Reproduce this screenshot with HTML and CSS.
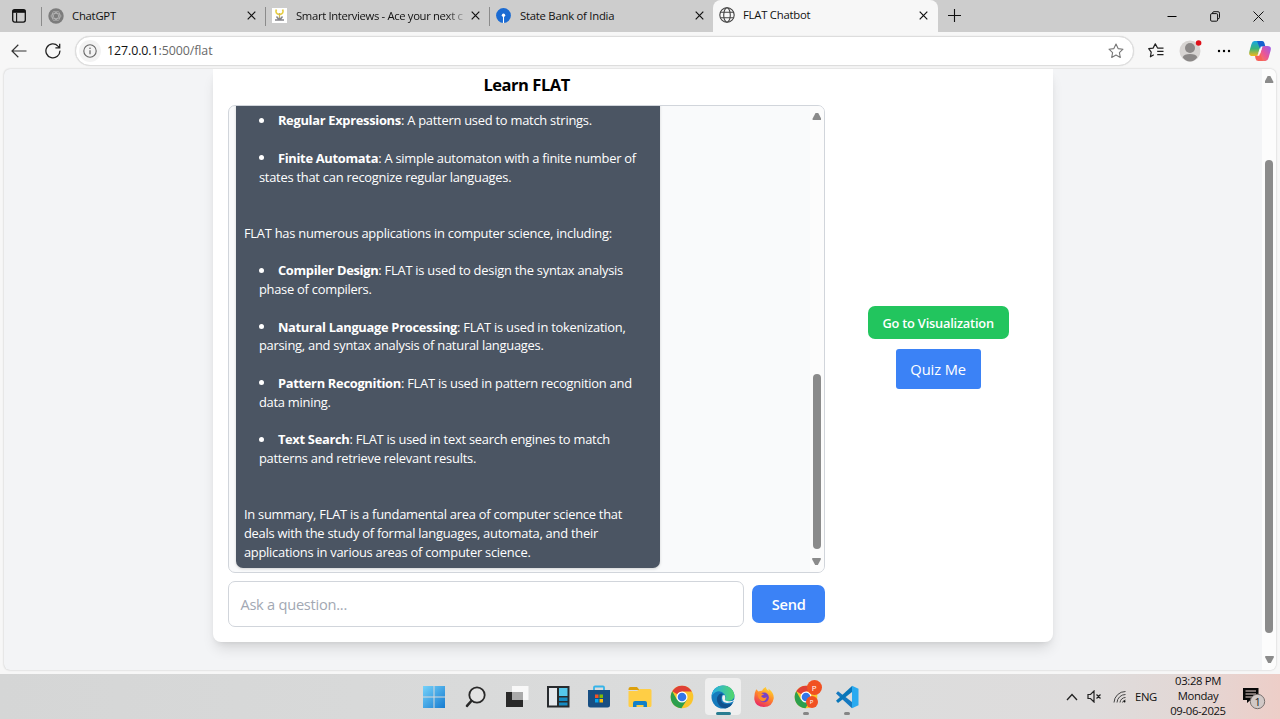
FILE: index.html
```html
<!DOCTYPE html>
<html lang="en">
<head>
<meta charset="utf-8">
<title>FLAT Chatbot</title>
<link rel="stylesheet" href="styles.css">
</head>
<body>
<header class="tabs">
  <div class="tab-menu"><svg width="14" height="14" viewBox="0 0 14 14"><rect x=".7" y=".7" width="12.6" height="12.4" rx="2" fill="none" stroke="#111" stroke-width="1.3"/><path d="M1.200 1.200h11.600v2H1.200z" fill="#111" stroke="#111" stroke-width="1.100"/><path d="M4.600 4v9" stroke="#111" stroke-width="1.100"/></svg></div>
  <div class="tab tab-1">
    <svg width="16" height="16" viewBox="0 0 16 16"><circle cx="8" cy="8" r="7.7" fill="#7c7c7c"/><g fill="none" stroke="#b5b5b5" stroke-width=".8"><ellipse cx="8" cy="8" rx="4.9" ry="2.6"/><ellipse cx="8" cy="8" rx="4.9" ry="2.6" transform="rotate(60 8 8)"/><ellipse cx="8" cy="8" rx="4.9" ry="2.6" transform="rotate(120 8 8)"/></g></svg>
    <span class="tab-name">ChatGPT</span>
    <svg class="x" width="9" height="9" viewBox="0 0 9 9"><path d="M.7.7l7.6 7.6M8.3.7L.7 8.3"/></svg>
  </div>
  <div class="tab tab-2">
    <svg width="15" height="15" viewBox="0 0 15 15"><path d="M0 0h15v15H0z" fill="#fff"/><path d="M4.500 1.500c-1.500 2.500 0 5 3 5s4.500-2.500 3-5" fill="none" stroke="#e6cd45" stroke-width="1.700"/><path d="M7.500 5v5" stroke="#cdb65a" stroke-width="1.300"/><path d="M4.500 8.500l1.500 2h3l1.500-2M3 12h9" fill="none" stroke="#85858a" stroke-width="1.400"/></svg>
    <span class="tab-name fade">Smart Interviews - Ace your next c</span>
    <svg class="x" width="9" height="9" viewBox="0 0 9 9"><path d="M.7.7l7.6 7.6M8.3.7L.7 8.3"/></svg>
  </div>
  <div class="tab tab-3">
    <svg width="15" height="15" viewBox="0 0 15 15"><circle cx="7.500" cy="7.500" r="7.400" fill="#1b6bd2"/><circle cx="7.500" cy="7.300" r="1.700" fill="#fff"/><path d="M7.500 7v8" stroke="#fff" stroke-width="1.100"/></svg>
    <span class="tab-name">State Bank of India</span>
    <svg class="x" width="9" height="9" viewBox="0 0 9 9"><path d="M.7.7l7.6 7.6M8.3.7L.7 8.3"/></svg>
  </div>
  <div class="tab active">
    <svg width="16" height="16" viewBox="0 0 16 16" fill="none" stroke="#444" stroke-width="1.100"><circle cx="8" cy="8" r="7.200"/><ellipse cx="8" cy="8" rx="3.300" ry="7.200"/><path d="M1.500 5.300h13M1.500 10.700h13"/></svg>
    <span class="tab-name">FLAT Chatbot</span>
    <svg class="x" width="9" height="9" viewBox="0 0 9 9"><path d="M.7.7l7.6 7.6M8.3.7L.7 8.3"/></svg>
  </div>
  <svg class="plus" width="13" height="13" viewBox="0 0 13 13"><path d="M6.500 0v13M0 6.500h13" stroke="#111" stroke-width="1.100"/></svg>
  <div class="window-buttons">
    <svg width="10" height="11" viewBox="0 0 10 11"><path d="M.5 5.500h9" stroke="#000"/></svg>
    <svg width="10" height="11" viewBox="0 0 10 11" fill="none" stroke="#111"><rect x=".6" y="2.600" width="7" height="7.600" rx="1.200"/><path d="M2.600 2.600V2q0-1.300 1.300-1.300H8Q9.500.7 9.500 2.200v4.300q0 1.300-1.500 1.300"/></svg>
    <svg width="11" height="11" viewBox="0 0 11 11"><path d="M.5.5l10 10M10.500.5l-10 10" stroke="#111"/></svg>
  </div>
</header>

<nav class="toolbar">
  <svg class="back" width="16" height="14" viewBox="0 0 16 14" fill="none" stroke="#333" stroke-width="1.200"><path d="M15.500 7H1.200M7.300.8L1 7l6.300 6.200"/></svg>
  <svg class="reload" width="16" height="16" viewBox="0 0 16 16" fill="none" stroke="#222" stroke-width="1.300"><path d="M14.900 7.600A7 7 0 1 1 13 3.100l1.500 1.500M14.700.7v4.200h-4.300"/></svg>
  <div class="address">
    <span class="info"><svg width="14" height="14" viewBox="0 0 14 14"><circle cx="7" cy="7" r="6.200" fill="none" stroke="#666" stroke-width="1.100"/><path d="M7 6.200v4" stroke="#666" stroke-width="1.200"/><circle cx="7" cy="4.200" r=".8" fill="#666"/></svg></span>
    <span class="url">127.0.0.1<span>:5000/flat</span></span>
    <svg class="star" width="16" height="16" viewBox="0 0 16 16"><path d="M8 1.100l2.100 4.500 4.900.6-3.600 3.400.9 4.900L8 12.100l-4.300 2.400.9-4.900L1 6.200l4.900-.6z" fill="none" stroke="#777" stroke-width="1.100" stroke-linejoin="round"/></svg>
  </div>
  <svg class="favs" width="16" height="15" viewBox="0 0 16 15" fill="none" stroke="#222" stroke-width="1.200" stroke-linejoin="round"><path d="M5.800 11.800l-3.400 2 .8-4.600L.7 5.700l4.400-.6L7.300.9l2.100 3.900M9.200 5.200H15.500M9.200 8.400h6.300M9.200 11.600h6.300"/></svg>
  <svg class="avatar" width="24" height="24" viewBox="0 0 24 24"><circle cx="11" cy="13" r="10.500" fill="#d7d4d2"/><circle cx="11" cy="10" r="5" fill="#8b8887"/><path d="M3.700 19.200Q5 16 11 16t7.300 3.200A9 9 0 0 1 11 23.500a9 9 0 0 1-7.300-4.300" fill="#8b8887"/><circle cx="19.600" cy="5" r="2.800" fill="#df1019"/></svg>
  <svg class="dots" width="14" height="4" viewBox="0 0 14 4"><circle cx="2" cy="2" r="1.200"/><circle cx="7" cy="2" r="1.200"/><circle cx="12" cy="2" r="1.200"/></svg>
  <svg class="copilot" width="22" height="20" viewBox="0 0 22 20">
    <defs><linearGradient id="ca" x1="0" y1="0" x2="0" y2="1"><stop offset="0" stop-color="#18a5e5"/><stop offset=".5" stop-color="#38b47b"/><stop offset="1" stop-color="#f4b91d"/></linearGradient><linearGradient id="cb" x1="1" y1="0" x2="0" y2="1"><stop offset="0" stop-color="#965df0"/><stop offset=".5" stop-color="#e85699"/><stop offset="1" stop-color="#ff823f"/></linearGradient></defs>
    <path d="M5.500 0h7.500L8.700 13.800Q8.400 15 7.200 15H3.500Q-1 15 .5 10L2.500 3Q3.300 0 5.500 0z" fill="url(#ca)"/><path d="M16.500 20H9l4.300-14Q13.700 5 14.800 5h3.700q4.500 0 3 5l-2 7q-.8 3-3 3z" fill="url(#cb)"/><path d="M8 0h5.200q1.700 0 2.200 2l.8 3h-1.500q-1.500 0-2 1.500L11.500 9z" fill="#1561ce"/><path d="M13.800 20H9.500Q7 20 6.500 17.500L6 15h1.500q1.200 0 1.700-1.500L10.500 10z" fill="#f7625b"/><path d="M11.800 5.500h1.700L10.200 14.800H8.700z" fill="#fff"/>
  </svg>
</nav>

<div class="viewport">
  <main class="page">
    <section class="card">
      <div class="chat">
        <h1>Learn FLAT</h1>
        <div class="history">
          <div class="messages">
            <div class="bubble">
              <ul>
                <li><b>Regular Expressions</b>: A pattern used to match strings.</li>
                <li><b>Finite Automata</b>: A simple automaton with a finite number of<br>states that can recognize regular languages.</li>
              </ul>
              <p>FLAT has numerous applications in computer science, including:</p>
              <ul>
                <li><b>Compiler Design</b>: FLAT is used to design the syntax analysis<br>phase of compilers.</li>
                <li><b>Natural Language Processing</b>: FLAT is used in tokenization,<br>parsing, and syntax analysis of natural languages.</li>
                <li><b>Pattern Recognition</b>: FLAT is used in pattern recognition and<br>data mining.</li>
                <li><b>Text Search</b>: FLAT is used in text search engines to match<br>patterns and retrieve relevant results.</li>
              </ul>
              <p>In summary, FLAT is a fundamental area of computer science that<br>deals with the study of formal languages, automata, and their<br>applications in various areas of computer science.</p>
            </div>
          </div>
          <div class="scrollbar chat-scroll"><i class="up"></i><i class="thumb"></i><i class="down"></i></div>
        </div>
        <form class="ask">
          <input type="text" placeholder="Ask a question...">
          <button type="button" class="send">Send</button>
        </form>
      </div>
      <aside class="actions">
        <button type="button" class="visualize">Go to Visualization</button>
        <button type="button" class="quiz">Quiz Me</button>
      </aside>
    </section>
  </main>
  <div class="scrollbar page-scroll"><i class="up"></i><i class="thumb"></i><i class="down"></i></div>
</div>

<footer class="taskbar">
  <div class="apps">
    <span><svg width="24" height="24" viewBox="0 0 24 24"><defs><linearGradient id="win" x2="1" y2="1"><stop stop-color="#75d2fa"/><stop offset="1" stop-color="#167bd0"/></linearGradient></defs><path d="M1 1h10.500v10.500H1zM12.500 1H23v10.500H12.500zM1 12.500h10.500V23H1zM12.500 12.500H23V23H12.500z" fill="url(#win)"/></svg></span>
    <span><svg width="24" height="24" viewBox="0 0 24 24"><circle cx="14" cy="10" r="7.700" fill="#e4e4e4" stroke="#292929" stroke-width="1.800"/><path d="M8.300 16L4 20.800" stroke="#292929" stroke-width="2.600" stroke-linecap="round"/></svg></span>
    <span><svg width="24" height="24" viewBox="0 0 24 24"><path d="M1 7h17v15H1z" fill="#292929"/><path d="M7 1h16.500v14H7z" fill="#fff" fill-opacity=".8"/><path d="M7 7h11v8H7z" fill="#aaa"/></svg></span>
    <span><svg width="24" height="24" viewBox="0 0 24 24"><path d="M1 1h22.500v21.500H1z" fill="#282b2e"/><path d="M3 3h8v17.500H3z" fill="#e5e8ec"/><path d="M13 3h8.500v8H13z" fill="#55c8ec"/><path d="M13 12.500h8.500V16H13zM13 17.500h8.500v3H13z" fill="#168bc2"/></svg></span>
    <span><svg width="24" height="24" viewBox="0 0 24 24"><path d="M7 6V2.500q0-1 1-1h8q1 0 1 1V6" fill="none" stroke="#35b4e9" stroke-width="1.800"/><path d="M1 5h22v15q0 2.500-2.500 2.500h-17Q1 22.500 1 20z" fill="#174e82"/><path d="M8 9.500h3.500V13H8z" fill="#f35325"/><path d="M12.500 9.500H16V13h-3.500z" fill="#81bc06"/><path d="M8 14h3.500v3.500H8z" fill="#05a6f0"/><path d="M12.500 14H16v3.500h-3.500z" fill="#ffba08"/></svg></span>
    <span><svg width="24" height="24" viewBox="0 0 24 24"><path d="M.5 4Q.5 2 2.500 2H9l2.500 3H.5z" fill="#dda00c"/><path d="M.5 6H9l3-2h10q1.500 0 1.500 1.500v15q0 1.500-1.500 1.500H2Q.5 22 .5 20.500z" fill="#ffce45"/><path d="M5 22v-4q0-2 2-2h10q2 0 2 2v4h-3.500v-2h-7v2z" fill="#1380c8"/></svg></span>
    <span><svg width="24" height="24" viewBox="0 0 24 24"><g id="chrome"><circle cx="12" cy="12" r="11.300" fill="#fbc52b"/><path d="M12 12L2.200 6.300A11.300 11.300 0 0 1 21.800 6.400H12z" fill="#df4036"/><path d="M12 12l4.900 2.800-5.500 8.500A11.300 11.300 0 0 1 2.200 6.300L7 14.800z" fill="#2c9f4d"/><circle cx="12" cy="12" r="5.500" fill="#fff"/><circle cx="12" cy="12" r="4.300" fill="#3476e8"/></g></svg></span>
    <span class="current"><svg width="24" height="24" viewBox="0 0 24 24"><defs><linearGradient id="edge" x2="1"><stop stop-color="#27aee9"/><stop offset="1" stop-color="#52d769"/></linearGradient></defs><circle cx="12" cy="12" r="11.500" fill="#157bbd"/><path d="M.6 11Q2 .5 12 .5 21 .5 23.200 9.500 24 16 17 16q-4 0-3-2 1.500-2.500-.5-4.800Q9.500 4.500 4 7.500 1.500 9 .6 11z" fill="url(#edge)"/><path d="M8 9.500Q3.500 14 8 20q3 4 8 3 4-1.500 5.500-4.500Q9.500 21 10 13.500q0-3 2-4.500-2-1-4 .5z" fill="#10518e"/><path d="M11.500 10.500q-2 6.500 4.500 7.500 4 0 6.500-1.800 1.500-1 .5.800L24 19v-5q-2 2.500-6 2.200-5-.2-4-2.200.8-2-.5-4z" fill="#edf2f2"/></svg></span>
    <span><svg width="22" height="22" viewBox="0 0 24 24"><defs><linearGradient id="fox" x1=".8" y1="0" x2=".3" y2="1"><stop stop-color="#ffe52f"/><stop offset=".5" stop-color="#ff842c"/><stop offset="1" stop-color="#e82566"/></linearGradient></defs><path d="M3.500 3.500L6 6q2-1 4-.8 1-3.200 4-4.200 0 2.500 3 4.500V3q6.500 5 5.500 11-1.500 9-10.500 9T1.500 15Q1 8 3.500 3.500z" fill="url(#fox)"/><circle cx="12" cy="12.500" r="5.300" fill="#7842c8"/><path d="M5 8.500q4-2 7 1-3 0-3 2 2.500 3 6 .5-1 5-5 4.500T5 8.500z" fill="#ff8c2a"/></svg></span>
    <span class="running"><svg width="24" height="24" viewBox="0 0 24 24"><use href="#chrome"/></svg><em class="badge big">P</em><em class="badge small">P</em></span>
    <span class="running"><svg width="24" height="24" viewBox="0 0 24 24"><path d="M1 8.500l2-2.300L17 17v6.200z" fill="#1579c0"/><path d="M17 1L1 15.800l2 2.300L17 7z" fill="#0876b9"/><path d="M17 .8l6.500 3v16.400l-6.500 3z" fill="#29aaf0"/></svg></span>
  </div>
  <div class="tray">
    <svg class="chev" width="12" height="8" viewBox="0 0 12 8"><path d="M1 7l5-5.500L11 7" fill="none" stroke="#222" stroke-width="1.300"/></svg>
    <svg class="sound" width="15" height="13" viewBox="0 0 15 13" fill="none" stroke="#222" stroke-width="1.200"><path d="M1 4.500h2.500L7 1v11L3.500 8.500H1zM9.500 4.500l4 4M13.500 4.500l-4 4"/></svg>
    <svg class="wifi" width="13" height="13" viewBox="0 0 13 13" fill="none" stroke="#444"><path d="M1 12.500A11.500 11.500 0 0 1 12.500 1.500M4 12.500a8.500 8.500 0 0 1 8.500-8M7 12.500a5.500 5.500 0 0 1 5.500-5M9.500 12.500q.5-2 3-2.500"/><circle cx="11.500" cy="11.500" r="1" fill="#111" stroke="none"/></svg>
    <span class="lang">ENG</span>
    <div class="clock"><span>03:28 PM</span><span>Monday</span><span>09-06-2025</span></div>
    <svg class="notice" width="24" height="24" viewBox="0 0 24 24"><path d="M1 1h15.500v12H8.500L5 16v-3H1z" fill="#080808"/><path d="M3.500 4h10.500M3.500 7h10.500M3.500 10h7" stroke="#eed8d3"/><circle cx="15.500" cy="14.500" r="7.200" fill="#d1c9c7" stroke="#77706e"/><text x="15.500" y="18.500" text-anchor="middle" font-size="11" fill="#222">1</text></svg>
  </div>
</footer>
</body>
</html>
```
FILE: styles.css
```css
* { box-sizing: border-box; }
body { margin: 0; width: 1280px; height: 719px; overflow: hidden; background: #f7f7f7; color: #111; font-family: "Open Sans", "Noto Sans", sans-serif; display: flex; flex-direction: column; }
svg { display: block; flex: none; }
h1, p, ul { margin: 0; padding: 0; }
button, input { font: inherit; border: 0; padding: 0; }

.tabs { height: 32px; flex: none; display: flex; align-items: center; background: #cdcdcd; font-size: 11.3px; letter-spacing: -.24px; }
.tab-menu { width: 41px; padding-left: 12px; }
.tab { height: 19px; width: 224px; display: flex; align-items: center; border-left: 1px solid #8b8b8b; padding: 0 9px 1px 6px; }
.tab-name { flex: 1; margin: -1px 0 0 8px; white-space: nowrap; }
.tab-2 .tab-name, .tab-3 .tab-name { margin-left: 9px; }
.fade { letter-spacing: -.35px; -webkit-mask-image: linear-gradient(90deg, #000 88%, transparent 102%); margin-right: 5px; }
.tab.active { height: 32px; width: 225px; border: 0; border-radius: 8px 8px 0 0; background: #f7f7f7; padding: 0 10px 2px 6px; }
.x { fill: none; stroke: #111; stroke-width: 1.2; }
.plus { margin: 0 0 2px 10px; }
.window-buttons { display: flex; align-items: center; gap: 33px; margin-left: auto; padding-right: 16px; }

.toolbar { height: 37px; flex: none; display: flex; align-items: center; padding-left: 10.500px; background: #f7f7f7; }
.reload { margin-left: 18px; }
.address { width: 1059px; height: 30px; margin-left: 14.500px; display: flex; align-items: center; padding: 0 9px 0 3px; background: #fff; border: 1px solid #ddd; border-radius: 15px; box-shadow: 0 0 1px #ccc; }
.info { width: 22px; height: 22px; border-radius: 50%; background: #f3f3f3; display: grid; place-items: center; }
.url { flex: 1; margin-left: 6px; font-size: 12.4px; letter-spacing: -.08px; }
.url span { color: #696969; }
.favs { margin-left: 14px; }
.avatar { margin: -1px 0 0 15px; }
.dots { margin-left: 14px; }
.copilot { margin-left: 18px; }

.viewport { height: 601px; flex: none; margin: 0 4px; display: flex; background: #f3f4f6; border-radius: 6px; overflow: hidden; box-shadow: 0 0 2px #bbb; }
.page { flex: 1; padding-left: 209.400px; overflow: hidden; }
.card { width: 840px; height: 573px; padding: 0 15px 15px; display: flex; background: #fff; border-radius: 0 0 8px 8px; box-shadow: 0 9px 14px -3px rgba(0,0,0,.12), 0 3px 6px -3px rgba(0,0,0,.1); }
.chat { width: 596.500px; display: flex; flex-direction: column; }
h1 { height: 36px; font-size: 16.500px; line-height: 32px; font-weight: 700; text-align: center; letter-spacing: -.45px; color: #000; }
.history { height: 468px; display: flex; overflow: hidden; background: #f9fafb; border: 1px solid #d1d5db; border-radius: 7px; }
.messages { flex: 1; display: flex; flex-direction: column; justify-content: flex-end; padding: 0 0 4px 7px; overflow: hidden; }
.bubble { width: 424px; flex: none; padding: 24px 7.500px 6.700px; color: #fff; background: #4b5563; border-radius: 7px; box-shadow: 0 1px 3px rgba(0,0,0,.16); font-size: 12.900px; line-height: 18.750px; letter-spacing: -.245px; white-space: nowrap; }
.bubble ul { padding-left: 15px; list-style: none; }
.bubble li { margin-bottom: 18.750px; }
.bubble li::before { content: ""; display: inline-block; width: 5px; height: 5px; border-radius: 50%; background: #fff; margin: 0 13.500px 2.500px .5px; vertical-align: baseline; }
.bubble ul + p { margin-top: 37.500px; }
.bubble p + ul { margin-top: 18.750px; }
.bubble b { font-weight: 700; letter-spacing: -.3px; }
.ask { margin-top: 7.500px; display: flex; align-items: center; gap: 8px; }
.ask input { width: 516px; height: 46.500px; padding: 0 11px; border: 1px solid #d1d5db; border-radius: 7px; font-size: 14.600px; letter-spacing: -.24px; background: #fff; }
.ask input::placeholder { color: #a2a8b3; opacity: 1; }
.send { width: 72.500px; height: 37.500px; border-radius: 7px; background: #3b82f6; color: #fff; font-size: 14.600px; font-weight: 600; letter-spacing: -.25px; }
.actions { flex: 1; display: flex; flex-direction: column; align-items: center; padding: 237px 0 0 13px; }
.visualize { width: 141px; height: 33px; padding-top: 1px; border-radius: 7px; background: #22c55e; color: #fff; font-size: 12.800px; font-weight: 600; letter-spacing: -.2px; }
.quiz { width: 85px; height: 39.500px; margin-top: 10px; padding-top: 1px; border-radius: 3px; background: #3b82f6; color: #fff; font-size: 14.700px; letter-spacing: -.1px; }

.scrollbar { width: 14px; flex: none; display: flex; flex-direction: column; align-items: center; background: #fcfcfc; }
.scrollbar i { display: block; background: #8b8b8b; flex: none; }
.up, .down { width: 9px; height: 7px; clip-path: polygon(35% 0, 65% 0, 100% 85%, 95% 100%, 5% 100%, 0 85%); }
.down { transform: rotate(180deg); }
.thumb { width: 8px; border-radius: 4px; }
.chat-scroll .up { margin-top: 7px; }
.chat-scroll .thumb { height: 175px; margin-top: 254px; }
.chat-scroll .down { margin-top: 9px; }
.page-scroll .up { margin-top: 7px; }
.page-scroll .thumb { height: 473px; margin-top: 77px; }
.page-scroll .down { margin-top: 23px; }

.taskbar { height: 45px; flex: none; margin-top: 4px; display: flex; background: linear-gradient(90deg, #d5d6d6 0, #dcdddd 65%, #dedcdc 85%, #e2d8d6 92%, #edcec8 100%); }
.apps { display: flex; padding: 4px 0 0 416px; gap: 5.300px; }
.apps span { position: relative; width: 36px; height: 37px; display: grid; place-items: center; border-radius: 4px; }
.apps .current { background: #efefef; }
.current::after, .running::after { content: ""; position: absolute; bottom: 0; width: 15px; height: 3px; border-radius: 2px; background: #287d91; }
.running::after { width: 6px; background: #858585; }
.badge { position: absolute; display: grid; place-items: center; border-radius: 50%; background: #f15122; color: #fff; font-style: normal; line-height: 1; }
.big { width: 15px; height: 15px; font-size: 8px; left: 19px; top: 2px; }
.small { width: 12px; height: 12px; font-size: 6px; left: 18px; top: 18px; }
.tray { margin-left: auto; width: 214px; display: flex; align-items: center; font-size: 11.300px; letter-spacing: -.35px; }
.sound { margin-left: 9px; }
.wifi { margin-left: 11px; }
.lang { width: 23px; margin: -1px 0 0 9px; }
.clock { width: 62px; margin: -2px 0 0 9px; display: flex; flex-direction: column; text-align: center; line-height: 15px; white-space: nowrap; }
.notice { margin: 5px 0 0 13px; }
```
